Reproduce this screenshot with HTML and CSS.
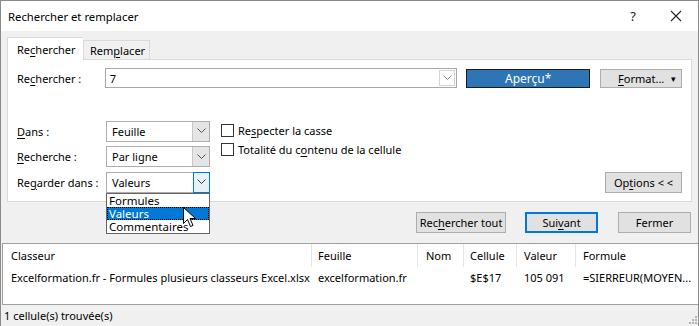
FILE: index.html
```html
<!DOCTYPE html>
<html lang="fr">
<head>
  <meta charset="UTF-8" />
  <title>Rechercher et remplacer</title>
  <link rel="stylesheet" href="styles.css">
</head>
<body>
  <div class="window">
    <div class="titlebar">
      <span class="title">Rechercher et remplacer</span>
      <span class="help">?</span>
      <svg class="close" width="12" height="12" viewBox="0 0 12 12"><path d="M1 1 L11 11 M11 1 L1 11" stroke="#222" stroke-width="1.1" fill="none"/></svg>
    </div>

    <div class="body">
      <div class="tabs">
        <div class="tab active">Re<u>c</u>hercher</div>
        <div class="tab">Rem<u>p</u>lacer</div>
      </div>

      <div class="panel">
        <div class="find-row">
          <label class="find-label">Re<u>c</u>hercher :</label>
          <div class="find-input">
            <span>7</span>
            <span class="find-arrow"><svg width="9" height="6" viewBox="0 0 9 6"><path d="M0.5 0.5 L4.5 4.5 L8.5 0.5" stroke="#888" fill="none"/></svg></span>
          </div>
          <button class="btn preview">Aperçu*</button>
          <button class="btn format"><u>F</u>ormat...<span class="caret">▾</span></button>
        </div>

        <div class="options">
          <div class="fields">
            <div class="field">
              <label><u>D</u>ans :</label>
              <div class="combo"><span>Feuille</span><span class="combo-arrow"><svg width="9" height="6" viewBox="0 0 9 6"><path d="M0.5 0.5 L4.5 4.5 L8.5 0.5" stroke="#555" fill="none"/></svg></span></div>
            </div>
            <div class="field">
              <label><u>R</u>echerche :</label>
              <div class="combo"><span>Par ligne</span><span class="combo-arrow"><svg width="9" height="6" viewBox="0 0 9 6"><path d="M0.5 0.5 L4.5 4.5 L8.5 0.5" stroke="#555" fill="none"/></svg></span></div>
            </div>
            <div class="field">
              <label>Re<u>g</u>arder dans :</label>
              <div class="combo open"><span>Valeurs</span><span class="combo-arrow"><svg width="9" height="6" viewBox="0 0 9 6"><path d="M0.5 0.5 L4.5 4.5 L8.5 0.5" stroke="#333" fill="none"/></svg></span>
                <ul class="dropdown">
                  <li>Formules</li>
                  <li class="selected">Valeurs</li>
                  <li>Commentaires</li>
                </ul>
                <svg class="cursor" width="14" height="21" viewBox="0 0 14 21"><path d="M0.5 0.5 L0.5 16.5 L4.5 12.5 L7.5 19.5 L10 18.5 L7 11.5 L12.5 11.5 Z" fill="#fff" stroke="#000" stroke-linejoin="round"/></svg>
              </div>
            </div>
          </div>
          <div class="checks">
            <div class="check"><span class="box"></span>Re<u>s</u>pecter la casse</div>
            <div class="check"><span class="box"></span>Totalité du c<u>o</u>ntenu de la cellule</div>
          </div>
          <button class="btn options-btn">Op<u>t</u>ions &lt; &lt;</button>
        </div>
      </div>

      <div class="actions">
        <button class="btn action">Rec<u>h</u>ercher tout</button>
        <button class="btn action default">Sui<u>v</u>ant</button>
        <button class="btn action">Fermer</button>
      </div>
    </div>

    <div class="results">
      <div class="rrow head">
        <div class="c1">Classeur</div>
        <div class="c2">Feuille</div>
        <div class="c3">Nom</div>
        <div class="c4">Cellule</div>
        <div class="c5">Valeur</div>
        <div class="c6">Formule</div>
      </div>
      <div class="rrow">
        <div class="c1">Excelformation.fr - Formules plusieurs classeurs Excel.xlsx</div>
        <div class="c2">excelformation.fr</div>
        <div class="c3"></div>
        <div class="c4">$E$17</div>
        <div class="c5">105 091</div>
        <div class="c6">=SIERREUR(MOYEN...</div>
      </div>
    </div>

    <div class="status">
      <span>1 cellule(s) trouvée(s)</span>
      <svg class="grip" width="8" height="8" viewBox="0 0 8 8" fill="#b5b5b5"><rect x="6" y="0" width="2" height="2"/><rect x="3" y="3" width="2" height="2"/><rect x="6" y="3" width="2" height="2"/><rect x="0" y="6" width="2" height="2"/><rect x="3" y="6" width="2" height="2"/><rect x="6" y="6" width="2" height="2"/></svg>
    </div>
  </div>
</body>
</html>
```

FILE: styles.css
```css
* {
  box-sizing: border-box;
}
body {
  margin: 0;
  font-family: 'Noto Sans', 'Open Sans', sans-serif;
  font-size: 11px;
  color: #000;
  background: #fff;
}
u {
  text-decoration-thickness: 1px;
  text-underline-offset: 2px;
}
.window {
  width: 699px;
  height: 326px;
  border: 1px solid #8a8a8a;
  border-bottom: none;
  background: #f0f0f0;
  display: flex;
  flex-direction: column;
  overflow: hidden;
}
.titlebar {
  height: 30px;
  background: #fff;
  display: flex;
  align-items: center;
  padding-left: 7px;
  flex-shrink: 0;
}
.title {
  flex: 1;
  font-size: 11.3px;
}
.help {
  font-size: 13px;
  color: #222;
  margin-right: 34px;
}
.close {
  margin-right: 16px;
}
.body {
  padding: 6px 6px 0 6px;
}
.tabs {
  display: flex;
  align-items: flex-end;
  height: 22px;
}
.tab {
  height: 19px;
  padding: 0 6px;
  border: 1px solid #d9d9d9;
  border-bottom: none;
  background: #f0f0f0;
  display: flex;
  align-items: center;
  width: 67px;
  white-space: nowrap;
}
.tab.active {
  height: 23px;
  width: 76px;
  background: #fff;
  border-right: none;
  padding-left: 9px;
  margin-bottom: -1px;
  position: relative;
}
.panel {
  height: 143px;
  background: #fff;
  border: 1px solid #d9d9d9;
  padding: 8px 9px 8px 9px;
  display: flex;
  flex-direction: column;
  justify-content: space-between;
}
.find-row {
  display: flex;
  align-items: center;
  height: 20px;
}
.find-label {
  width: 88px;
}
.find-input {
  width: 353px;
  height: 20px;
  border: 1px solid #a8a8a8;
  display: flex;
  align-items: center;
  justify-content: space-between;
  padding: 0 1px 0 4px;
}
.find-arrow {
  width: 16px;
  height: 16px;
  border: 1px solid #d4d4d4;
  display: flex;
  align-items: center;
  justify-content: center;
}
.btn {
  font: inherit;
  color: #000;
  background: #e1e1e1;
  border: 1px solid #adadad;
  padding: 0;
  display: flex;
  align-items: center;
  justify-content: center;
  white-space: nowrap;
}
.preview {
  width: 124px;
  height: 19px;
  margin-left: 9px;
  background: #2e75b6;
  border: 1px solid #1b1b1b;
  color: #fff;
  font-size: 12px;
}
.format {
  width: 82px;
  height: 19px;
  margin-left: 10px;
  justify-content: flex-start;
  padding-left: 17px;
}
.caret {
  margin-left: auto;
  margin-right: 5px;
  font-size: 9px;
}
.options {
  display: flex;
  align-items: flex-start;
  height: 72px;
}
.fields {
  display: flex;
  flex-direction: column;
  gap: 5px;
}
.field {
  display: flex;
  align-items: center;
  height: 20.5px;
}
.field label {
  width: 89px;
}
.combo {
  width: 104px;
  height: 21px;
  border: 1px solid #adadad;
  display: flex;
  align-items: center;
  justify-content: space-between;
  padding-left: 5px;
  position: relative;
}
.combo-arrow {
  width: 17px;
  height: 19px;
  background: #e5e5e5;
  border-left: 1px solid #c8c8c8;
  display: flex;
  align-items: center;
  justify-content: center;
}
.combo.open .combo-arrow {
  background: #e5f1fb;
  border: 1px solid #0078d7;
  height: 21px;
  margin-right: -1px;
}
.dropdown {
  position: absolute;
  top: 20px;
  left: -1px;
  width: 104px;
  margin: 0;
  padding: 0;
  list-style: none;
  background: #fff;
  border: 1px solid #646464;
  font-size: 11.5px;
  line-height: 13px;
  z-index: 2;
}
.dropdown li {
  padding-left: 2px;
  height: 13px;
}
.dropdown li.selected {
  background: #0078d7;
  color: #fff;
  outline: 1px dotted #000;
  outline-offset: -1px;
}
.cursor {
  position: absolute;
  top: 34px;
  left: 76px;
  z-index: 3;
}
.checks {
  display: flex;
  flex-direction: column;
  gap: 5px;
  margin-left: 11px;
  padding-top: 2px;
}
.check {
  display: flex;
  align-items: center;
  height: 14px;
}
.box {
  width: 13px;
  height: 13px;
  border: 1px solid #333;
  background: #fff;
  margin-right: 4px;
}
.options-btn {
  width: 77px;
  height: 21px;
  margin-left: auto;
  margin-top: 51px;
  margin-right: 0;
}
.actions {
  display: flex;
  justify-content: flex-end;
  gap: 19px;
  padding: 10px 1px 0 0;
  height: 31px;
}
.action {
  width: 73px;
  height: 21px;
}
.action:first-child {
  width: 90px;
}
.action.default {
  border: 2px solid #0078d7;
  margin-right: 1px;
}
.results {
  margin-top: 10px;
  height: 62px;
  background: #fff;
  border: 1px solid #a0a0a0;
  border-right: none;
  margin-left: 1px;
}
.rrow {
  display: flex;
  height: 21px;
  align-items: center;
  white-space: nowrap;
}
.rrow.head {
  height: 23px;
  align-items: stretch;
}
.rrow.head > div {
  display: flex;
  align-items: center;
  border-right: 1px solid #e5e5e5;
}
.rrow.head > .c6 {
  border-right: none;
}
.c1 { width: 309px; padding-left: 8px; }
.c2 { width: 106px; padding-left: 6px; }
.c3 { width: 46px; padding-left: 8px; }
.c4 { width: 53px; padding-left: 6px; }
.c5 { width: 59px; padding-left: 7px; }
.c6 { flex: 1; padding-left: 7px; }
.status {
  height: 21px;
  display: flex;
  align-items: center;
  justify-content: space-between;
  padding: 0 1px 0 3px;
}
.grip {
  align-self: flex-end;
  margin-bottom: 2px;
}
```
